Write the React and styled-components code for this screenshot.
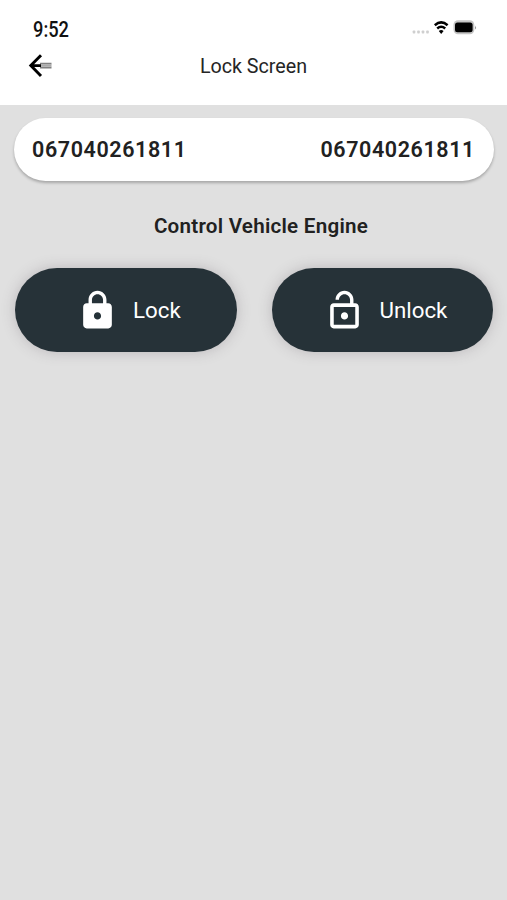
import React from "react";
import styled, { createGlobalStyle } from "styled-components";
import { MdLock, MdLockOpen } from "react-icons/md";

const GlobalStyle = createGlobalStyle`
  * {
    box-sizing: border-box;
  }
  body {
    margin: 0;
    background-color: #e0e0e0;
    font-family: Roboto, "Liberation Sans", sans-serif;
  }
`;

const Container = styled.div`
  min-height: 100vh;
  display: flex;
  flex-direction: column;
  background-color: #e0e0e0;
`;

const Header = styled.header`
  height: 105px;
  background-color: #ffffff;
`;

const StatusBar = styled.div`
  height: 45px;
  padding: 16px 30px 0 33px;
  display: flex;
  justify-content: space-between;
  align-items: flex-start;
`;

const Time = styled.div`
  color: #111111;
  font-size: 22px;
  font-weight: 500;
  line-height: 27px;
  transform: scaleX(0.83);
  transform-origin: left;
`;

const StatusIcons = styled.svg`
  display: block;
  width: 66px;
  height: 16px;
  margin-top: 3px;
`;

const NavBar = styled.div`
  height: 40px;
  padding: 0 28px;
  display: grid;
  grid-template-columns: 26px 1fr 26px;
  align-items: center;
`;

const BackButton = styled.button`
  display: flex;
  padding: 0;
  border: none;
  background: none;
  cursor: pointer;
`;

const Title = styled.h1`
  margin: 0;
  padding-top: 3px;
  color: #252525;
  font-size: 19.7px;
  font-weight: 400;
  line-height: 24px;
  text-align: center;
`;

const Content = styled.main`
  padding: 13px 13px 0 14px;
`;

const DeviceCard = styled.div`
  height: 63px;
  padding: 0 19px 0 18px;
  display: flex;
  justify-content: space-between;
  align-items: center;
  background-color: #ffffff;
  border-radius: 32px;
  box-shadow: 0 2px 3px rgba(0, 0, 0, 0.26);
`;

const DeviceNumber = styled.div`
  color: #212121;
  font-size: 21.5px;
  font-weight: 600;
  letter-spacing: 0.6px;
`;

const SectionTitle = styled.h2`
  margin: 32px 0 0;
  padding-left: 14px;
  color: #212121;
  font-size: 20.6px;
  font-weight: 600;
  letter-spacing: 0.25px;
  line-height: 26px;
  text-align: center;
`;

const ButtonRow = styled.div`
  margin-top: 29px;
  padding: 0 1px;
  display: flex;
  justify-content: space-between;
`;

const EngineButton = styled.button`
  width: 221.5px;
  height: 84px;
  padding: 0 0 0 ${(props) => props.$inset}px;
  display: flex;
  align-items: center;
  gap: 14px;
  color: #ffffff;
  background-color: #263238;
  border: none;
  border-radius: 42px;
  box-shadow: 0 0 14px rgba(80, 70, 80, 0.26);
  font-family: inherit;
  font-size: 22.3px;
  cursor: pointer;
`;

function BackArrow() {
  return (
    <svg width="26" height="26" viewBox="0 0 26 26" fill="none">
      <path d="M12 11.6h11.5M12 15.6h11.5" stroke="#808080" strokeWidth="1.6" />
      <path d="M12 13.6h11.5" stroke="#aaa" strokeWidth="2.4" />
      <path d="M13 3.2L2.8 13.6L13 24M3 13.6h10" stroke="#000" strokeWidth="2.9" />
    </svg>
  );
}

// signal dots, wifi and battery
function PhoneStatus() {
  return (
    <StatusIcons viewBox="0 0 66 16" fill="none">
      <g fill="#cfcfcf">
        <rect x="1.7" y="11.5" width="2.6" height="3" rx="0.8" />
        <rect x="6.2" y="11.5" width="2.6" height="3" rx="0.8" />
        <rect x="10.7" y="11.5" width="2.6" height="3" rx="0.8" />
        <rect x="15.2" y="11.5" width="2.6" height="3" rx="0.8" />
      </g>
      <g stroke="#000" strokeWidth="2.5">
        <path d="M23.8 6.2Q30.2 0.6 36.6 6.2" />
        <path d="M26.2 9.5Q30.2 6 34.2 9.5" />
      </g>
      <path d="M27.8 12Q30.2 10 32.6 12L30.2 15Z" fill="#000" />
      <rect x="42.5" y="1.2" width="20.8" height="14" rx="4.5" fill="#c4c4c4" />
      <rect x="44" y="3.4" width="17.6" height="9.8" rx="2.5" fill="#000" />
      <path d="M64.2 6.5q1.5 2 0 4z" fill="#777" />
    </StatusIcons>
  );
}

function App() {
  const device = "067040261811";

  return (
    <Container>
      <GlobalStyle />
      <Header>
        <StatusBar>
          <Time>9:52</Time>
          <PhoneStatus />
        </StatusBar>
        <NavBar>
          <BackButton aria-label="Back">
            <BackArrow />
          </BackButton>
          <Title>Lock Screen</Title>
        </NavBar>
      </Header>
      <Content>
        <DeviceCard>
          <DeviceNumber>{device}</DeviceNumber>
          <DeviceNumber>{device}</DeviceNumber>
        </DeviceCard>
        <SectionTitle>Control Vehicle Engine</SectionTitle>
        <ButtonRow>
          <EngineButton $inset={61}>
            <MdLock size={43} />
            Lock
          </EngineButton>
          <EngineButton $inset={51}>
            <MdLockOpen size={43} />
            Unlock
          </EngineButton>
        </ButtonRow>
      </Content>
    </Container>
  );
}

export default App;
